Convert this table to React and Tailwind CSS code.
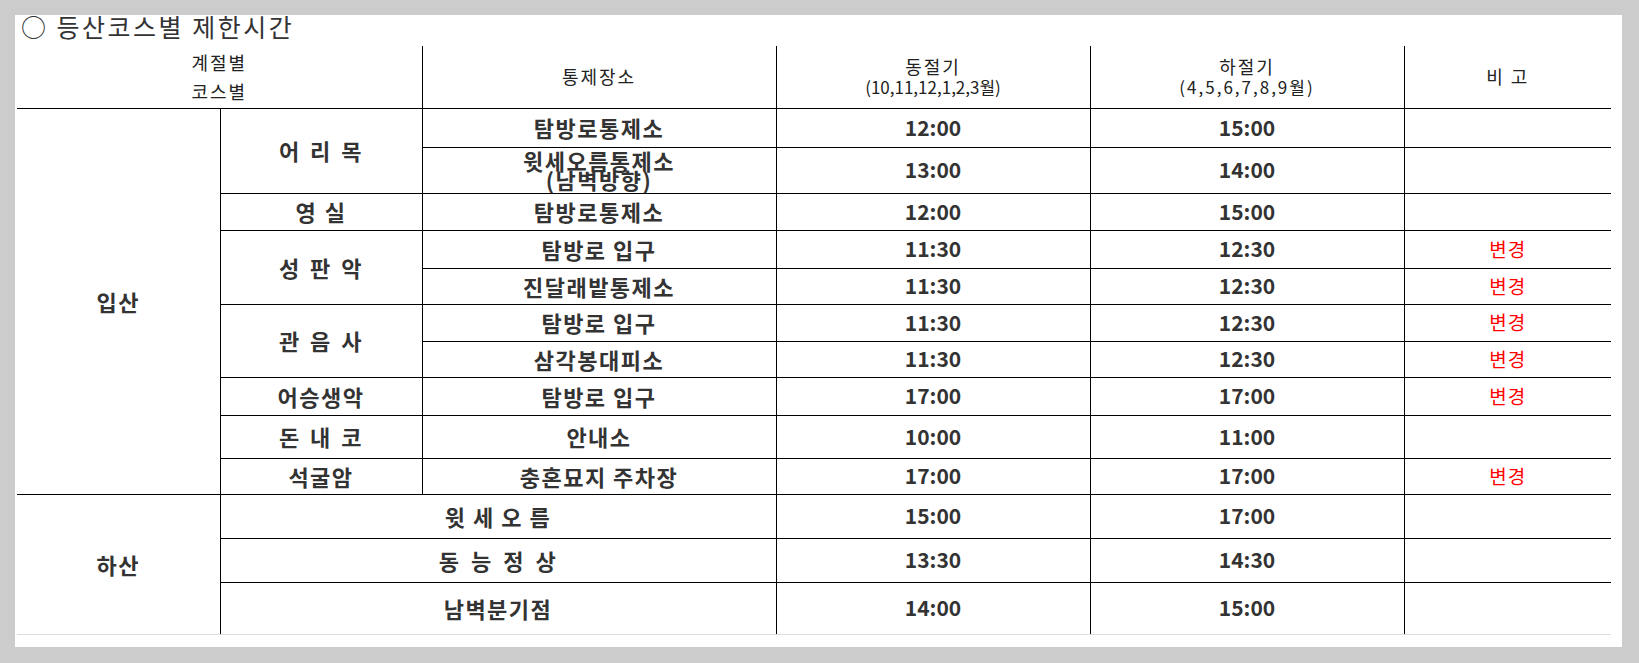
import React from 'react';

const font = "font-['Noto_Sans_CJK_KR','Noto_Sans',sans-serif]";
const th = "border-r border-b border-black text-center align-middle font-normal text-[18px] tracking-[2px] text-[#222] p-0";
const thLast = "border-b border-black text-center align-middle font-normal text-[18px] tracking-[2px] text-[#222] p-0";
// korean text cells
const td = "border-r border-b border-black text-center align-middle font-bold text-[22px] tracking-[1.5px] text-[#333] p-0";
// time cells
const tt = "border-r border-b border-black text-center align-middle font-bold text-[21px] text-[#333] p-0";
const tdNote = "border-b border-black text-center align-middle font-normal text-[19px] tracking-[1px] text-[#ff0000] p-0";
const tdEnd = "border-r border-b border-r-black border-b-[#ddd] text-center align-middle font-bold text-[22px] tracking-[1.5px] text-[#333] p-0";
const ttEnd = "border-r border-b border-r-black border-b-[#ddd] text-center align-middle font-bold text-[21px] text-[#333] p-0";
const tdEndNote = "border-b border-b-[#ddd] text-center align-middle p-0";

const App = () => {
    return (
        <div className={"bg-[#cccccc] h-[663px] p-[15px] " + font}>
            <div className="bg-white w-[1607px] h-[632px] pl-[2px]">
                {/* title */}
                <p className="h-[31px] text-[25px] leading-[22px] tracking-[2.5px] text-[#333] pl-[4px]">○ 등산코스별 제한시간</p>

                <table className="w-[1594px] table-fixed border-collapse">
                    <colgroup>
                        <col className="w-[203px]" />
                        <col className="w-[202px]" />
                        <col className="w-[354px]" />
                        <col className="w-[314px]" />
                        <col className="w-[314px]" />
                        <col className="w-[207px]" />
                    </colgroup>
                    <thead>
                        <tr className="h-[62px]">
                            <th colSpan={2} className={th + " leading-[29px]"}>계절별<br />코스별</th>
                            <th className={th}>통제장소</th>
                            <th className={th + " leading-[20px]"}>동절기<br /><span className="text-[17px] tracking-normal">(10,11,12,1,2,3월)</span></th>
                            <th className={th + " leading-[20px]"}>하절기<br /><span className="text-[17px] tracking-[2px]">(4,5,6,7,8,9월)</span></th>
                            <th className={thLast}>비 고</th>
                        </tr>
                    </thead>
                    <tbody>
                        <tr className="h-[39px]">
                            <td rowSpan={10} className={td}>입산</td>
                            <td rowSpan={2} className={td + " [word-spacing:3px]"}>어 리 목</td>
                            <td className={td}>탐방로통제소</td>
                            <td className={tt}>12:00</td>
                            <td className={tt}>15:00</td>
                            <td className={tdNote}></td>
                        </tr>
                        <tr className="h-[46px]">
                            <td className={td + " leading-[19px]"}>윗세오름통제소<br />(남벽방향)</td>
                            <td className={tt}>13:00</td>
                            <td className={tt}>14:00</td>
                            <td className={tdNote}></td>
                        </tr>
                        <tr className="h-[37px]">
                            <td className={td + " [word-spacing:1px]"}>영 실</td>
                            <td className={td}>탐방로통제소</td>
                            <td className={tt}>12:00</td>
                            <td className={tt}>15:00</td>
                            <td className={tdNote}></td>
                        </tr>
                        <tr className="h-[38px]">
                            <td rowSpan={2} className={td + " [word-spacing:3px]"}>성 판 악</td>
                            <td className={td}>탐방로 입구</td>
                            <td className={tt}>11:30</td>
                            <td className={tt}>12:30</td>
                            <td className={tdNote}>변경</td>
                        </tr>
                        <tr className="h-[36px]">
                            <td className={td}>진달래밭통제소</td>
                            <td className={tt}>11:30</td>
                            <td className={tt}>12:30</td>
                            <td className={tdNote}>변경</td>
                        </tr>
                        <tr className="h-[37px]">
                            <td rowSpan={2} className={td + " [word-spacing:3px]"}>관 음 사</td>
                            <td className={td}>탐방로 입구</td>
                            <td className={tt}>11:30</td>
                            <td className={tt}>12:30</td>
                            <td className={tdNote}>변경</td>
                        </tr>
                        <tr className="h-[36px]">
                            <td className={td}>삼각봉대피소</td>
                            <td className={tt}>11:30</td>
                            <td className={tt}>12:30</td>
                            <td className={tdNote}>변경</td>
                        </tr>
                        <tr className="h-[38px]">
                            <td className={td}>어승생악</td>
                            <td className={td}>탐방로 입구</td>
                            <td className={tt}>17:00</td>
                            <td className={tt}>17:00</td>
                            <td className={tdNote}>변경</td>
                        </tr>
                        <tr className="h-[43px]">
                            <td className={td + " [word-spacing:3px]"}>돈 내 코</td>
                            <td className={td}>안내소</td>
                            <td className={tt}>10:00</td>
                            <td className={tt}>11:00</td>
                            <td className={tdNote}></td>
                        </tr>
                        <tr className="h-[36px]">
                            <td className={td}>석굴암</td>
                            <td className={td}>충혼묘지 주차장</td>
                            <td className={tt}>17:00</td>
                            <td className={tt}>17:00</td>
                            <td className={tdNote}>변경</td>
                        </tr>

                        {/* 하산 */}
                        <tr className="h-[44px]">
                            <td rowSpan={3} className={tdEnd}>하산</td>
                            <td colSpan={2} className={td}>윗 세 오 름</td>
                            <td className={tt}>15:00</td>
                            <td className={tt}>17:00</td>
                            <td className={tdNote}></td>
                        </tr>
                        <tr className="h-[44px]">
                            <td colSpan={2} className={td + " [word-spacing:4px]"}>동 능 정 상</td>
                            <td className={tt}>13:30</td>
                            <td className={tt}>14:30</td>
                            <td className={tdNote}></td>
                        </tr>
                        <tr className="h-[52px]">
                            <td colSpan={2} className={tdEnd}>남벽분기점</td>
                            <td className={ttEnd}>14:00</td>
                            <td className={ttEnd}>15:00</td>
                            <td className={tdEndNote}></td>
                        </tr>
                    </tbody>
                </table>
            </div>
        </div>
    );
}

export default App;
